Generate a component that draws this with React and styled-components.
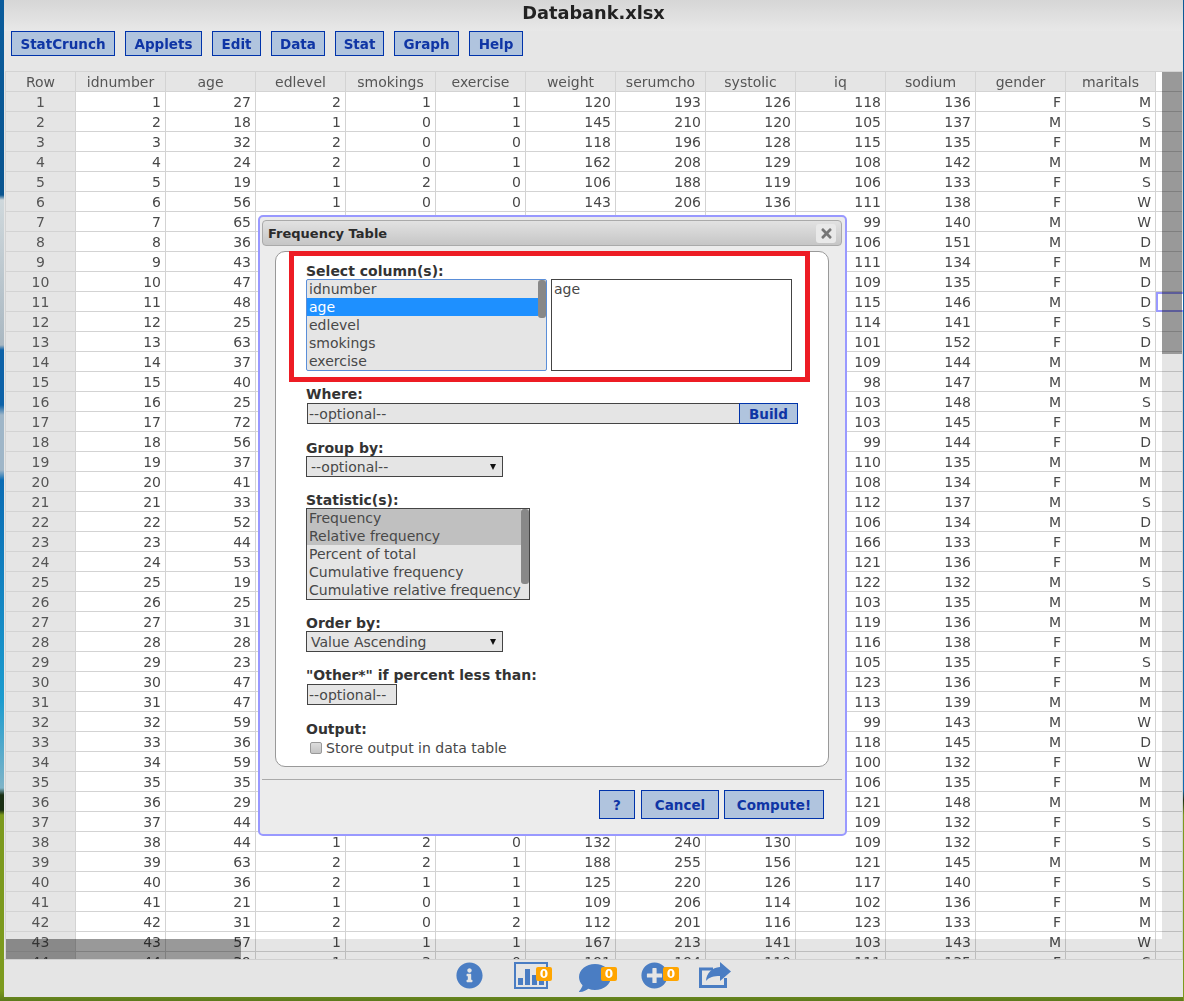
import React from "react"
import styled, { createGlobalStyle } from "styled-components"
import { FaInfoCircle, FaComment, FaPlusCircle, FaTimes } from "react-icons/fa"

const GlobalStyle = createGlobalStyle`
  html, body {
    margin: 0;
    padding: 0;
    overflow: hidden;
    font-family: "DejaVu Sans", Verdana, sans-serif;
  }
  * {
    box-sizing: border-box;
  }
`

const Desktop = styled.div`
  width: 1184px;
  height: 1001px;
  padding: 0 1px 4px 4px;
  background:
    linear-gradient(180deg, #0b5a96 0, #0d6ab0 790px, #1a2f14 800px, #7c9a1e 815px) right / 1px 100% no-repeat,
    linear-gradient(180deg,
      #0a5c9c 0, #0a5590 195px, #cfd8dc 200px, #aab8c2 345px, #0d62a8 350px, #0d62a8 405px,
      #9fb6c8 415px, #9fb6c8 470px, #0a6cb4 480px, #1c9ccf 700px, #7fb4c8 788px,
      #1a2f14 795px, #1a2f14 810px, #7c9a1e 815px, #7c9a1e 990px, #5c7a1c 1001px);
`
const Window = styled.div`
  position: relative;
  display: flex;
  flex-direction: column;
  height: 100%;
  background: #e6e6e6;
`
const TitleBar = styled.div`
  height: 31px;
  padding-top: 3px;
  text-align: center;
  font-size: 17.75px;
  line-height: 20px;
  font-weight: 700;
  color: #222;
  background: linear-gradient(180deg, #d6d6d6 0%, #e8e8e8 100%);
`
const MenuBar = styled.div`
  display: flex;
  gap: 10px;
  height: 25px;
  padding-left: 7px;
  margin-bottom: 15px;
`
const Button = styled.div`
  display: flex;
  align-items: center;
  justify-content: center;
  width: ${p => p.$w}px;
  height: ${p => p.$h || 25}px;
  margin-right: ${p => p.$mr || 0}px;
  background: #b0c4de;
  border: 1px solid #0033aa;
  color: #0f35a5;
  font-size: 13.5px;
  font-weight: 700;
`

const GridWrap = styled.div`
  position: relative;
  flex: 1;
  margin-left: 1px;
  overflow: hidden;
  border-top: 1px solid #d3d3d3;
  border-left: 1px solid #d3d3d3;
  background: #fff;
`
const Row = styled.div`
  display: flex;
  height: 20px;
`
const Cell = styled.div`
  flex: ${p => (p.$fill ? "1" : "none")};
  width: ${p => (p.$head ? 70 : 90)}px;
  height: 20px;
  padding: 0 4px;
  border-right: 1px solid #d3d3d3;
  border-bottom: 1px solid #d3d3d3;
  background: ${p => (p.$bar ? "#e5e5e5" : "#fff")};
  color: ${p => (p.$bar ? "#555" : "#484848")};
  font-size: 14px;
  line-height: 20px;
  text-align: ${p => (p.$bar ? "center" : "right")};
  white-space: nowrap;
  ${p => p.$picked && "border: 2px solid #9999ff; border-right: 0;"}
`
const TrackV = styled.div`
  position: absolute;
  top: 0;
  right: 1px;
  width: 20px;
  height: 867px;
  background: #e5e5e5;
  mix-blend-mode: multiply;
`
const ThumbV = styled.div`
  width: 20px;
  height: 282px;
  background: #999;
`
const TrackH = styled.div`
  position: absolute;
  left: 0;
  right: 1px;
  bottom: 0;
  height: 20px;
  background: #e5e5e5;
  mix-blend-mode: multiply;
`
const ThumbH = styled.div`
  width: 235px;
  height: 20px;
  background: #999;
`

const BottomBar = styled.div`
  display: flex;
  justify-content: center;
  align-items: flex-start;
  gap: 31px;
  height: 38px;
  padding-top: 2px;
  border-top: 1px solid #cfcfcf;
  background: #e5e5e5;
  color: #4a7dc3;
`
const IconSlot = styled.div`
  position: relative;
  width: ${p => p.$w}px;
  height: 28px;
  margin-right: ${p => p.$mr || 0}px;
`
const Badge = styled.span`
  position: absolute;
  top: 5px;
  left: 22px;
  width: 16px;
  height: 14px;
  border-radius: 2px;
  background: #ffa500;
  color: #fff;
  font-size: 12px;
  font-weight: 700;
  line-height: 14px;
  text-align: center;
`

const Dialog = styled.div`
  position: absolute;
  left: 254px;
  top: 215px;
  width: 589px;
  height: 621px;
  padding: 3px 3px 0 2px;
  border: 2px solid #9999ff;
  border-radius: 5px;
  background: #ececec;
`
const DialogTitle = styled.div`
  display: flex;
  align-items: center;
  justify-content: space-between;
  height: 26px;
  padding: 0 5px;
  border: 1px solid #aaa;
  border-radius: 4px;
  background: linear-gradient(180deg, #e2e2e2 0%, #c6c6c6 100%);
  color: #2b2b2b;
  font-size: 13px;
  font-weight: 700;
`
const CloseButton = styled.div`
  display: flex;
  align-items: center;
  justify-content: center;
  width: 20px;
  height: 19px;
  border-radius: 3px;
  background: #e9e9e9;
  color: #777;
  font-size: 15px;
`
const Panel = styled.div`
  position: relative;
  height: 516px;
  margin: 5px 13px 0;
  padding: 11px 0 0 30px;
  border: 1px solid #999;
  border-radius: 10px;
  background: #fff;
`
const RedBox = styled.div`
  position: absolute;
  left: 13px;
  top: -1px;
  width: 521px;
  height: 131px;
  border: 5px solid #ed1c24;
  pointer-events: none;
`
const Field = styled.div`
  margin-bottom: ${p => p.$mb ?? 15}px;
`
const Label = styled.div`
  height: 16px;
  color: #333;
  font-size: 14px;
  font-weight: 700;
  line-height: 16px;
  white-space: nowrap;
`
const ListRow = styled.div`
  display: flex;
  gap: 4px;
`
const ListBox = styled.div`
  position: relative;
  width: ${p => p.$w}px;
  height: 92px;
  padding: 0 8px 0 0;
  overflow: hidden;
  border: 1px solid ${p => (p.$focus ? "#5a8ed8" : "#444")};
  border-radius: ${p => (p.$focus ? 2 : 0)}px;
  background: ${p => (p.$plain ? "#fff" : "#e5e5e5")};
`
const Option = styled.div`
  height: 18px;
  padding-left: 2px;
  background: ${p => p.$bg || "transparent"};
  color: ${p => p.$color || "#484848"};
  font-size: 14px;
  line-height: 18px;
  white-space: nowrap;
`
const ListThumb = styled.div`
  position: absolute;
  top: 0;
  right: 0;
  width: 8px;
  height: ${p => p.$h}px;
  border-radius: 3px;
  background: #888;
`
const TextBox = styled.div`
  width: ${p => p.$w}px;
  height: 21px;
  margin-left: 1px;
  padding-left: 1px;
  border: 1px solid #444;
  background: #e5e5e5;
  color: #484848;
  font-size: 14px;
  line-height: 20px;
  white-space: nowrap;
`
const WhereRow = styled.div`
  display: flex;
  margin-top: 1px;
`
const BuildButton = styled(Button)`
  margin-left: -1px;
`
const SelectBox = styled.div`
  display: flex;
  align-items: center;
  justify-content: space-between;
  width: 197px;
  height: 21px;
  padding: 0 6px 0 4px;
  border: 1px solid #444;
  background: #e5e5e5;
  color: #484848;
  font-size: 14px;
  &::after {
    content: "";
    border-top: 6px solid #111;
    border-left: 3px solid transparent;
    border-right: 3px solid transparent;
  }
`
const CheckRow = styled.div`
  display: flex;
  align-items: center;
  gap: 4px;
  margin: 2px 0 0 4px;
  color: #484848;
  font-size: 14px;
  line-height: 18px;
`
const CheckBox = styled.span`
  width: 12px;
  height: 12px;
  border: 1px solid #999;
  border-radius: 2px;
  background: linear-gradient(180deg, #ddd, #c4c4c4);
`
const DialogFooter = styled.div`
  display: flex;
  justify-content: flex-end;
  gap: 5px;
  margin-top: 12px;
  padding: 10px 18px 0 0;
  border-top: 1px solid #aaa;
`

const columns = ["idnumber", "age", "edlevel", "smokings", "exercise", "weight", "serumcho", "systolic", "iq", "sodium", "gender", "maritals"]

// columns hidden behind the dialog are left blank (- in the strings)
const rows = [
  "1 27 2 1 1 120 193 126 118 136 F M",
  "2 18 1 0 1 145 210 120 105 137 M S",
  "3 32 2 0 0 118 196 128 115 135 F M",
  "4 24 2 0 1 162 208 129 108 142 M M",
  "5 19 1 2 0 106 188 119 106 133 F S",
  "6 56 1 0 0 143 206 136 111 138 F W",
  "7 65 - - - - - - 99 140 M W",
  "8 36 - - - - - - 106 151 M D",
  "9 43 - - - - - - 111 134 F M",
  "10 47 - - - - - - 109 135 F D",
  "11 48 - - - - - - 115 146 M D",
  "12 25 - - - - - - 114 141 F S",
  "13 63 - - - - - - 101 152 F D",
  "14 37 - - - - - - 109 144 M M",
  "15 40 - - - - - - 98 147 M M",
  "16 25 - - - - - - 103 148 M S",
  "17 72 - - - - - - 103 145 F M",
  "18 56 - - - - - - 99 144 F D",
  "19 37 - - - - - - 110 135 M M",
  "20 41 - - - - - - 108 134 F M",
  "21 33 - - - - - - 112 137 M S",
  "22 52 - - - - - - 106 134 M D",
  "23 44 - - - - - - 166 133 F M",
  "24 53 - - - - - - 121 136 F M",
  "25 19 - - - - - - 122 132 M S",
  "26 25 - - - - - - 103 135 M M",
  "27 31 - - - - - - 119 136 M M",
  "28 28 - - - - - - 116 138 F M",
  "29 23 - - - - - - 105 135 F S",
  "30 47 - - - - - - 123 136 F M",
  "31 47 - - - - - - 113 139 M M",
  "32 59 - - - - - - 99 143 M W",
  "33 36 - - - - - - 118 145 M D",
  "34 59 - - - - - - 100 132 F W",
  "35 35 - - - - - - 106 135 F M",
  "36 29 - - - - - - 121 148 M M",
  "37 44 - - - - - - 109 132 F S",
  "38 44 1 2 0 132 240 130 109 132 F S",
  "39 63 2 2 1 188 255 156 121 145 M M",
  "40 36 2 1 1 125 220 126 117 140 F S",
  "41 21 1 0 1 109 206 114 102 136 F M",
  "42 31 2 0 2 112 201 116 123 133 F M",
  "43 57 1 1 1 167 213 141 103 143 M W",
  "44 39 1 3 0 191 194 110 111 135 F S",
]

const menu = [["StatCrunch", 104], ["Applets", 77], ["Edit", 49], ["Data", 54], ["Stat", 49], ["Graph", 65], ["Help", 54]]

function ChartIcon () {
  return (
    <svg width="34" height="27" viewBox="0 0 34 27" fill="currentColor">
      <rect x="1" y="1" width="32" height="25" fill="none" stroke="currentColor" strokeWidth="2" />
      <rect x="4" y="16" width="5" height="7" />
      <rect x="11" y="7" width="5" height="16" />
      <rect x="18" y="13" width="5" height="10" />
      <rect x="25" y="18" width="5" height="5" />
    </svg>
  )
}

function ShareIcon () {
  return (
    <svg width="32" height="26" viewBox="0 0 32 26" fill="currentColor">
      <path d="M14 7H1.5V24.5H26.5V16" fill="none" stroke="currentColor" strokeWidth="3" />
      <path d="M21 0L32 9.5L21 19V14C15 14 10 15 7 19C7.5 11 13 5.5 21 5Z" />
    </svg>
  )
}

function DataGrid () {
  return (
    <GridWrap>
      <Row>
        <Cell $head $bar>Row</Cell>
        {columns.map(c => <Cell key={c} $bar>{c}</Cell>)}
        <Cell $fill />
      </Row>
      {rows.map((line, i) => {
        const values = line.split(" ")
        return (
          <Row key={values[0]}>
            <Cell $head $bar>{values[0]}</Cell>
            {values.map((v, j) => <Cell key={j}>{v === "-" ? null : v}</Cell>)}
            <Cell $fill $picked={i === 10} />
          </Row>
        )
      })}
      <TrackV><ThumbV /></TrackV>
      <TrackH><ThumbH /></TrackH>
    </GridWrap>
  )
}

function FrequencyDialog () {
  return (
    <Dialog>
      <DialogTitle>
        Frequency Table
        <CloseButton><FaTimes /></CloseButton>
      </DialogTitle>
      <Panel>
        <Field>
          <Label>Select column(s):</Label>
          <ListRow>
            <ListBox $w={241} $focus>
              <Option>idnumber</Option>
              <Option $bg="#1e90ff" $color="#fff">age</Option>
              <Option>edlevel</Option>
              <Option>smokings</Option>
              <Option>exercise</Option>
              <ListThumb $h={38} />
            </ListBox>
            <ListBox $w={241} $plain>
              <Option>age</Option>
            </ListBox>
          </ListRow>
        </Field>
        <Field $mb={16}>
          <Label>Where:</Label>
          <WhereRow>
            <TextBox $w={433}>--optional--</TextBox>
            <BuildButton $w={59} $h={21}>Build</BuildButton>
          </WhereRow>
        </Field>
        <Field>
          <Label>Group by:</Label>
          <SelectBox>--optional--</SelectBox>
        </Field>
        <Field>
          <Label>Statistic(s):</Label>
          <ListBox $w={224}>
            <Option $bg="#c0c0c0">Frequency</Option>
            <Option $bg="#c0c0c0">Relative frequency</Option>
            <Option>Percent of total</Option>
            <Option>Cumulative frequency</Option>
            <Option>Cumulative relative frequency</Option>
            <ListThumb $h={75} />
          </ListBox>
        </Field>
        <Field>
          <Label>Order by:</Label>
          <SelectBox>Value Ascending</SelectBox>
        </Field>
        <Field $mb={16}>
          <Label>"Other*" if percent less than:</Label>
          <WhereRow>
            <TextBox $w={90}>--optional--</TextBox>
          </WhereRow>
        </Field>
        <Field $mb={0}>
          <Label>Output:</Label>
          <CheckRow>
            <CheckBox />
            Store output in data table
          </CheckRow>
        </Field>
        <RedBox />
      </Panel>
      <DialogFooter>
        <Button $w={36} $h={29} $mr={1}>?</Button>
        <Button $w={78} $h={29}>Cancel</Button>
        <Button $w={100} $h={29}>Compute!</Button>
      </DialogFooter>
    </Dialog>
  )
}

export default function App () {
  return (
    <Desktop>
      <GlobalStyle />
      <Window>
        <TitleBar>Databank.xlsx</TitleBar>
        <MenuBar>
          {menu.map(([label, w]) => <Button key={label} $w={w}>{label}</Button>)}
        </MenuBar>
        <DataGrid />
        <BottomBar>
          <IconSlot $w={27}><FaInfoCircle size={27} /></IconSlot>
          <IconSlot $w={34}><ChartIcon /><Badge>0</Badge></IconSlot>
          <IconSlot $w={33} $mr={-2}><FaComment size={32} /><Badge>0</Badge></IconSlot>
          <IconSlot $w={27}><FaPlusCircle size={27} /><Badge>0</Badge></IconSlot>
          <IconSlot $w={32}><ShareIcon /></IconSlot>
        </BottomBar>
        <FrequencyDialog />
      </Window>
    </Desktop>
  )
}
